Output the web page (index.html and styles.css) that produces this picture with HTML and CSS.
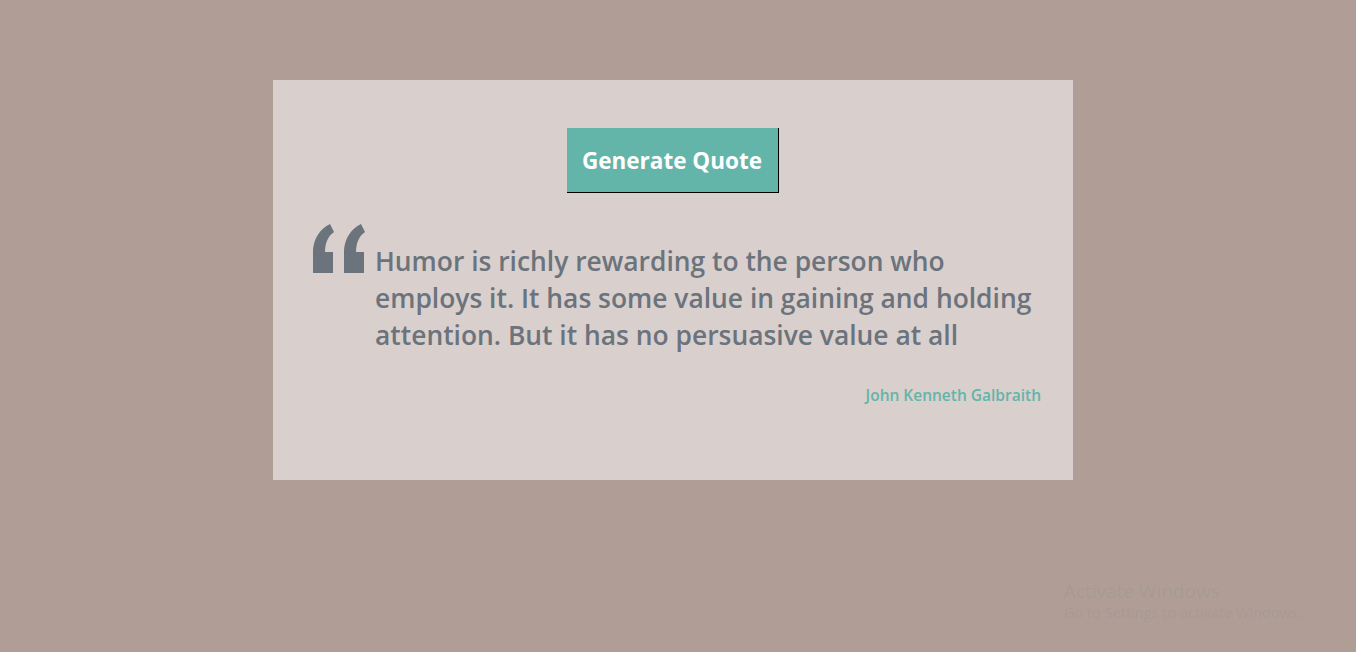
FILE: index.html
```html
<!DOCTYPE html>
<html lang="en">
<head>
  <meta charset="UTF-8" />
  <meta name="viewport" content="width=device-width, initial-scale=1.0"/>
  <title>Random Quote</title>
  <link rel="stylesheet" href="styles.css">
</head>
<body>
  <div id="quote-box">
    <button type="button" id="new-quote">Generate Quote</button>
    <div class="quote-row">
      <svg class="quote-mark" width="53" height="49" viewBox="0 0 53 49">
        <path d="M0,49 L20,49 L20,28 L12,28 C12,19 15,12 21,8 L17,0 C7,5 1,14 0,26 Z"/>
        <path d="M31,49 L51,49 L51,28 L43,28 C43,19 46,12 52,8 L48,0 C38,5 32,14 31,26 Z"/>
      </svg>
      <p id="text">Humor is richly rewarding to the person who employs it. It has some value in gaining and holding attention. But it has no persuasive value at all</p>
    </div>
    <p id="author">John Kenneth Galbraith</p>
  </div>

  <!-- водяной знак системы -->
  <div class="activate">
    <div class="activate-title">Activate Windows</div>
    <div class="activate-sub">Go to Settings to activate Windows.</div>
  </div>
</body>
</html>
```

FILE: styles.css
```css
body {
  margin: 0;
  padding-top: 80px;
  min-height: 100vh;
  box-sizing: border-box;
  background-color: #b09e96;
  font-family: "Open Sans", "Noto Sans", sans-serif;
}

#quote-box {
  width: 800px;
  height: 400px;
  margin-left: 273px;
  padding: 48px 32px 0 40px;
  box-sizing: border-box;
  background-color: #d9cfcc;
  display: flex;
  flex-direction: column;
}

#new-quote {
  align-self: center;
  width: 212px;
  height: 65px;
  margin-right: 9px;
  padding: 0;
  border: none;
  border-right: 1px solid #000;
  border-bottom: 1px solid #000;
  background-color: #63b5aa;
  color: #ffffff;
  font-family: inherit;
  font-size: 22.5px;
  font-weight: 700;
  cursor: pointer;
}

.quote-row {
  display: flex;
  align-items: flex-start;
  gap: 9px;
  margin-top: 31px;
}

.quote-mark {
  flex: none;
  fill: #6b737c;
}

#text {
  margin: 19px 0 0 0;
  font-size: 26.4px;
  font-weight: 600;
  line-height: 37px;
  color: #6b737c;
}

#author {
  margin: 31px 0 0 0;
  text-align: right;
  font-size: 15.5px;
  font-weight: 600;
  line-height: 20px;
  color: #63b5aa;
}

/* водяной знак поверх страницы */
.activate {
  position: fixed;
  left: 1064px;
  top: 580px;
  color: #a69a95;
  font-family: "Open Sans", sans-serif;
}

.activate-title {
  font-size: 19px;
  line-height: 22px;
}

.activate-sub {
  font-size: 14.5px;
  line-height: 22px;
}
```
